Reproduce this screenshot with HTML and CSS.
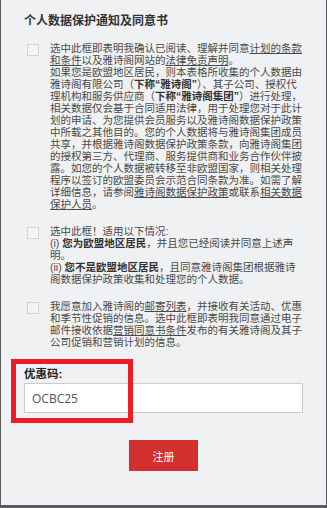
FILE: index.html
```html
<!DOCTYPE html>
<html lang="zh-CN">
<head>
    <meta charset="UTF-8">
    <meta name="viewport" content="width=device-width, initial-scale=1.0">
    <title>个人数据保护通知及同意书</title>
    <link rel="stylesheet" href="styles.css">
</head>
<body>

<div class="panel">
    <h2 class="title">个人数据保护通知及同意书</h2>

    <div class="consent">
        <span class="check"></span>
        <p>选中此框即表明我确认已阅读、理解并同意<u>计划的条款和条件</u>以及雅诗阁网站的<u>法律免责声明</u>。<br>如果您是欧盟地区居民，则本表格所收集的个人数据由雅诗阁有限公司（<b>下称“雅诗阁”</b>）、其子公司、授权代理机构和服务供应商（<b>下称“雅诗阁集团”</b>）进行处理，相关数据仅会基于合同适用法律，用于处理您对于此计划的申请、为您提供会员服务以及雅诗阁数据保护政策中所载之其他目的。您的个人数据将与雅诗阁集团成员共享，并根据雅诗阁数据保护政策条款，向雅诗阁集团的授权第三方、代理商、服务提供商和业务合作伙伴披露。如您的个人数据被转移至非欧盟国家，则相关处理程序以签订的欧盟委员会示范合同条款为准。如需了解详细信息，请参阅<u>雅诗阁数据保护政策</u>或联系<u>相关数据保护人员</u>。</p>
    </div>

    <div class="consent">
        <span class="check"></span>
        <p>选中此框！适用以下情况:<br>(i) <b>您为欧盟地区居民</b>，并且您已经阅读并同意上述声明。<br>(ii) <b>您不是欧盟地区居民</b>，且同意雅诗阁集团根据雅诗阁数据保护政策收集和处理您的个人数据。</p>
    </div>

    <div class="consent">
        <span class="check"></span>
        <p>我愿意加入雅诗阁的<u>邮寄列表</u>，并接收有关活动、优惠和季节性促销的信息。选中此框即表明我同意通过电子邮件接收依据<u>营销同意书条件</u>发布的有关雅诗阁及其子公司促销和营销计划的信息。</p>
    </div>

    <div class="coupon">
        <label for="coupon">优惠码:</label>
        <input type="text" id="coupon" value="OCBC25">
        <div class="highlight"></div>
    </div>

    <div class="actions">
        <button type="submit" class="submit-btn">注册</button>
    </div>
</div>

</body>
</html>
```

FILE: styles.css
```css
body {
    font-family: "Liberation Sans", "Noto Sans CJK SC", sans-serif;
    background-color: #5b5b60;
    margin: 0;
    padding: 0 1px 3px 1px;
}

.panel {
    background: #f0f1f3;
    min-height: 505px;
    padding: 13px 23px 0 23px;
    box-sizing: border-box;
}

.title {
    font-size: 12px;
    line-height: 16px;
    font-weight: bold;
    color: #333;
    margin: 0 0 13px 0;
}

.consent {
    display: flex;
    margin-bottom: 15px;
}

.check {
    flex: none;
    width: 12px;
    height: 12px;
    box-sizing: border-box;
    border: 1px solid #d3d3d5;
    background: #f3f4f5;
    margin: 2px 11px 0 3px;
}

.consent p {
    margin: 0;
    width: 253px;
    font-size: 10.5px;
    line-height: 12px;
    color: #4a4a4a;
}

.consent b {
    color: #333;
}

.coupon {
    position: relative;
    margin-top: 18px;
}

.coupon label {
    display: block;
    font-size: 11.5px;
    line-height: 16px;
    font-weight: bold;
    color: #222;
    margin-bottom: 1px;
}

.coupon input {
    display: block;
    width: 100%;
    height: 30px;
    box-sizing: border-box;
    padding: 0 7px;
    border: 1px solid #ccc;
    background: #fff;
    font-family: "Open Sans", sans-serif;
    font-size: 12px;
    color: #555;
}

.highlight {
    position: absolute;
    left: -13px;
    top: -7px;
    width: 122px;
    height: 64px;
    box-sizing: border-box;
    border: 5px solid #ee1c25;
}

.actions {
    text-align: center;
    margin-top: 27px;
}

.submit-btn {
    width: 69px;
    height: 31px;
    border: none;
    background-color: #d32f2f;
    color: white;
    font-family: "Liberation Sans", "Noto Sans CJK SC", sans-serif;
    font-size: 11px;
    cursor: pointer;
}
```
